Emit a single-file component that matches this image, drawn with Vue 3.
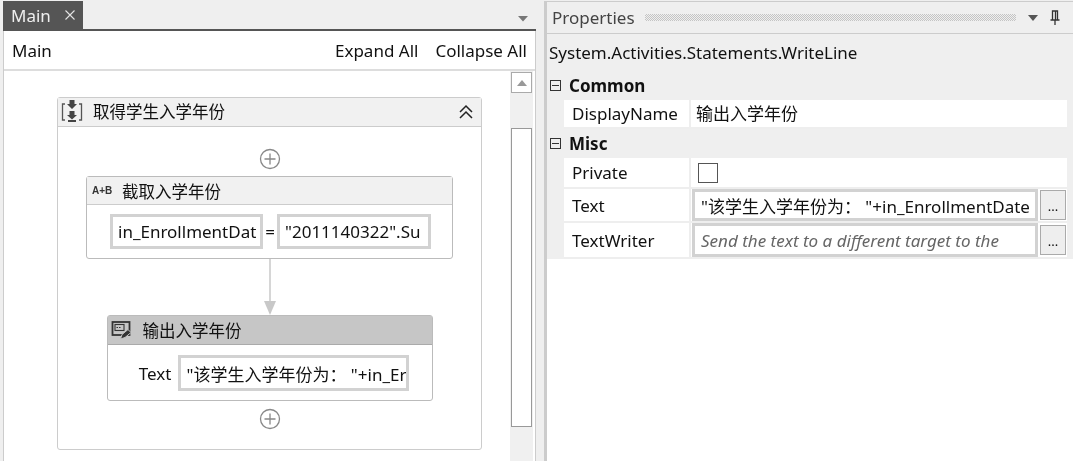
<script setup>
const categories = [
  { name: 'Common', h: 30, rows: [{ label: 'DisplayName', kind: 'plain', value: '输出入学年份', h: 29 }] },
  { name: 'Misc', h: 29, rows: [
    { label: 'Private', kind: 'check', h: 31 },
    { label: 'Text', kind: 'input', value: '"该学生入学年份为： "+in_EnrollmentDate', h: 34 },
    { label: 'TextWriter', kind: 'hint', value: 'Send the text to a different target to the', h: 36 }
  ] }
]
</script>

<template>
  <div class="page">
    <section class="left">
      <div class="tabbar">
        <div class="tab"><span>Main</span>
          <svg class="close" width="12" height="12" viewBox="0 0 12 12"><path d="M1.5 1.5l9 9M10.500 1.500l-9 9" stroke="#e4e4e4" stroke-width="1.100" fill="none"/></svg>
        </div>
        <svg class="tri" width="12" height="7" viewBox="0 0 12 7"><path d="M1 1h10L6 6.500z" fill="#777"/></svg>
      </div>
      <div class="doc">
        <div class="crumbs">
          <span>Main</span>
          <div class="crumb-actions"><span>Expand All</span><span>Collapse All</span></div>
        </div>
        <div class="designer">
          <div class="canvas">
            <div class="seq">
              <div class="seq-head">
                <svg width="26" height="26" viewBox="0 0 26 26" class="seq-icon">
                  <path d="M5 5H2.500v16H5M19 5h2.500v16H19" stroke="#555" stroke-width="1.300" fill="none"/>
                  <path d="M9.500 1h5v4h2.500l-5 5-5-5h2.500zM9.500 12h5v4h2.500l-5 4.500-5-4.500h2.500z" fill="#444"/>
                  <rect x="8" y="21" width="8" height="2" fill="#444"/>
                </svg>
                <span class="seq-title cjk">取得学生入学年份</span>
                <svg class="chev" width="16" height="16" viewBox="0 0 16 16"><path d="M2 8l6-6 6 6M2 14l6-6 6 6" stroke="#222" stroke-width="1.500" fill="none"/></svg>
              </div>
              <div class="seq-body">
                <svg class="plus first" width="22" height="22" viewBox="0 0 22 22"><circle cx="11" cy="11" r="9.500" stroke="#888" stroke-width="1.300" fill="#fff"/><path d="M11 5.500v11M5.500 11h11" stroke="#888" stroke-width="1.300"/></svg>
                <div class="card assign">
                  <div class="card-head">
                    <span class="ab">A+B</span>
                    <span class="card-title cjk">截取入学年份</span>
                  </div>
                  <div class="card-body">
                    <div class="field f1">in_EnrollmentDat</div>
                    <span class="eq">=</span>
                    <div class="field f2">"2011140322".Su</div>
                  </div>
                </div>
                <svg class="arrow" width="14" height="56" viewBox="0 0 14 56"><path d="M7 0v44" stroke="#c8c8c8" stroke-width="1.500"/><path d="M1 42h12L7 56z" fill="#c8c8c8"/></svg>
                <div class="card write">
                  <div class="card-head sel">
                    <svg class="wl" width="22" height="22" viewBox="0 0 22 22">
                      <rect x="1.500" y="3" width="17" height="13" fill="none" stroke="#333" stroke-width="1.800"/>
                      <rect x="4" y="5.500" width="9" height="6" fill="#c6c6c6" stroke="#333" stroke-width="1.100"/>
                      <path d="M5.500 8.500h1.500M8 8.500h1.500" stroke="#333" stroke-width="1.200"/>
                      <path d="M9.500 20l1.500-4.500 6-5 3 3-6 5z" fill="#333" stroke="#c6c6c6" stroke-width="1"/>
                    </svg>
                    <span class="card-title cjk">输出入学年份</span>
                  </div>
                  <div class="card-body wl-body">
                    <span class="t-label">Text</span>
                    <div class="field f3">"该学生入学年份为： "+in_Er</div>
                  </div>
                </div>
                <svg class="plus last" width="22" height="22" viewBox="0 0 22 22"><circle cx="11" cy="11" r="9.500" stroke="#888" stroke-width="1.300" fill="#fff"/><path d="M11 5.500v11M5.500 11h11" stroke="#888" stroke-width="1.300"/></svg>
              </div>
            </div>
          </div>
          <div class="scroll">
            <div class="sb-btn"><svg width="10" height="6" viewBox="0 0 10 6"><path d="M0 6L5 0l5 6z" fill="#999"/></svg></div>
            <div class="sb-thumb"></div>
          </div>
        </div>
      </div>
    </section>

    <section class="right">
      <div class="p-head">
        <span class="p-title">Properties</span>
        <div class="dots"></div>
        <svg width="10" height="6" viewBox="0 0 10 6" class="p-tri"><path d="M0 0h10L5 6z" fill="#555"/></svg>
        <svg width="12" height="16" viewBox="0 0 12 16" class="pin"><path d="M3.500 1h5v9h-5zM1.500 10h9M6 10v5M6.500 1.500v8" stroke="#333" stroke-width="1.300" fill="none"/></svg>
      </div>
      <div class="p-type">System.Activities.Statements.WriteLine</div>
      <template v-for="c in categories" :key="c.name">
        <div class="cat" :style="{ height: c.h + 'px' }">
          <span class="minus"></span>
          <span>{{ c.name }}</span>
        </div>
        <div class="rows">
          <div v-for="r in c.rows" :key="r.label" class="row" :style="{ height: r.h + 'px' }">
            <div class="r-label">{{ r.label }}</div>
            <div class="r-val">
              <span v-if="r.kind === 'plain'" class="plain">{{ r.value }}</span>
              <span v-else-if="r.kind === 'check'" class="check"></span>
              <template v-else>
                <div class="p-input" :class="{ hint: r.kind === 'hint' }">{{ r.value }}</div>
                <div class="dots-btn">...</div>
              </template>
            </div>
          </div>
        </div>
      </template>
      <div class="p-rest"></div>
    </section>
  </div>
</template>

<style scoped>
.page {
  width: 1073px;
  height: 461px;
  display: flex;
  overflow: hidden;
  background: #efefef;
  color: #111;
  font-family: "Noto Sans", "Noto Sans CJK SC", sans-serif;
  font-size: 17px;
  filter: blur(0.4px);
}
.cjk { font-size: 16.500px; }
.left {
  width: 533px;
  margin-left: 3px;
  display: flex;
  flex-direction: column;
  flex: none;
}
.tabbar {
  height: 28px;
  margin-top: 1px;
  display: flex;
  align-items: stretch;
  justify-content: space-between;
  border-bottom: 2px solid #555;
  flex: none;
}
.tab {
  width: 80px;
  background: #555;
  color: #eee;
  display: flex;
  align-items: center;
  gap: 13px;
  padding-left: 8px;
  box-sizing: border-box;
}
.close { flex: none; }
.tri { align-self: center; margin: 6px 7px 0 0; }
.doc {
  flex: 1;
  background: #fff;
  border-left: 1px solid #ccc;
  border-right: 1px solid #ccc;
  display: flex;
  flex-direction: column;
  min-height: 0;
}
.crumbs {
  height: 38px;
  display: flex;
  align-items: center;
  justify-content: space-between;
  padding: 0 8px 0 8px;
  border-bottom: 2px solid #ddd;
  flex: none;
}
.crumb-actions { display: flex; gap: 17px; }
.designer { flex: 1; display: flex; min-height: 0; }
.canvas { flex: 1; padding: 26px 0 0 53px; }
.seq {
  width: 425px;
  height: 353px;
  border: 1px solid #ccc;
  border-radius: 3px;
  box-sizing: border-box;
  display: flex;
  flex-direction: column;
}
.seq-head {
  height: 28px;
  flex: none;
  background: #f1f1f1;
  border-bottom: 1px solid #ccc;
  display: flex;
  align-items: center;
  padding: 0 7px 0 2px;
  gap: 7px;
}
.seq-icon { flex: none; }
.seq-title { flex: 1; padding-bottom: 3px; }
.chev { flex: none; }
.seq-body { display: flex; flex-direction: column; align-items: center; flex: 1; }
.plus { flex: none; }
.plus.first { margin: 21px 0 0; }
.plus.last { margin-top: 7px; }
.card {
  border: 1px solid #bbb;
  border-radius: 3px;
  box-sizing: border-box;
  background: #fff;
  flex: none;
}
.assign { width: 367px; height: 83px; margin-top: 6px; }
.write { width: 326px; height: 86px; }
.arrow { flex: none; }
.card-head {
  height: 27px;
  background: #f1f1f1;
  border-bottom: 1px solid #ccc;
  display: flex;
  align-items: center;
  gap: 6px;
  padding-left: 5px;
}
.card-head.sel { height: 28px; background: #c6c6c6; border-bottom-color: #aaa; gap: 10px; padding-left: 3px; }
.ab { font-size: 10px; font-weight: 700; color: #333; font-family: "Liberation Sans", sans-serif; width: 24px; }
.wl { flex: none; }
.card-body { display: flex; align-items: center; padding: 9px 0 0 23px; }
.wl-body { padding: 10px 23px 0 0; justify-content: flex-end; }
.field {
  height: 35px;
  border: 3px solid #d2d2d2;
  box-sizing: border-box;
  display: flex;
  align-items: center;
  padding-left: 5px;
  overflow: hidden;
  white-space: nowrap;
}
.f1 { width: 153px; }
.f2 { width: 154px; }
.f3 { width: 231px; height: 36px; padding-left: 6px; }
.eq { width: 14px; text-align: center; flex: none; }
.t-label { margin-right: 6px; }
.scroll {
  width: 23px;
  background: #f0f0f0;
  flex: none;
  margin-right: 2px;
  display: flex;
  flex-direction: column;
  align-items: center;
  padding-top: 1px;
  box-sizing: border-box;
}
.sb-btn {
  width: 21px;
  height: 21px;
  background: #fff;
  border: 1px solid #aaa;
  box-sizing: border-box;
  display: flex;
  align-items: center;
  justify-content: center;
  flex: none;
}
.sb-thumb {
  width: 21px;
  height: 299px;
  margin-top: 35px;
  background: #fff;
  border: 1px solid #999;
  box-sizing: border-box;
  flex: none;
}
.right {
  margin-left: 8px;
  flex: 1;
  min-width: 0;
  border-left: 3px solid #ccc;
  border-top: 1px solid #ccc;
  margin-top: 1px;
  display: flex;
  flex-direction: column;
}
.p-head {
  height: 31px;
  display: flex;
  align-items: center;
  padding-left: 5px;
  border-bottom: 1px solid #ccc;
  flex: none;
  color: #444;
}
.dots {
  flex: none;
  width: 371px;
  height: 7px;
  margin-left: 10px;
  background: repeating-conic-gradient(#c4c4c4 0 25%, transparent 0 50%) 0 0 / 2px 2px;
}
.p-tri { margin-left: 12px; flex: none; }
.pin { margin-left: 11px; flex: none; }
.p-type { height: 36px; padding-left: 2px; display: flex; align-items: center; flex: none; }
.cat {
  display: flex;
  align-items: center;
  gap: 8px;
  padding-left: 3px;
  font-weight: 700;
  flex: none;
}
.minus {
  width: 11px;
  height: 11px;
  border: 1px solid #333;
  box-sizing: border-box;
  background: linear-gradient(#333, #333) center / 7px 1px no-repeat;
  flex: none;
}
.rows { margin-left: 17px; margin-right: 6px; background: #fff; flex: none; }
.row { display: flex; border-bottom: 2px solid #eee; box-sizing: border-box; }
.r-label { width: 127px; padding-left: 8px; box-sizing: border-box; border-right: 2px solid #eee; display: flex; align-items: center; flex: none; }
.r-val { flex: 1; display: flex; align-items: center; min-width: 0; padding-left: 1px; }
.plain { padding-left: 4px; padding-bottom: 3px; }
.check { width: 20px; height: 20px; border: 1px solid #555; box-sizing: border-box; margin-left: 6px; }
.p-input {
  width: 346px;
  height: 100%;
  border: 3px solid #d2d2d2;
  box-sizing: border-box;
  padding-left: 6px;
  display: flex;
  align-items: center;
  white-space: nowrap;
  overflow: hidden;
  flex: none;
}
.hint { font-style: italic; color: #666; }
.dots-btn {
  width: 26px;
  height: 30px;
  margin-left: 2px;
  border: 1px solid #aaa;
  background: #eee;
  box-sizing: border-box;
  text-align: center;
  line-height: 30px;
  font-size: 13px;
  flex: none;
}
.p-rest { flex: 1; background: #fff; }
</style>
